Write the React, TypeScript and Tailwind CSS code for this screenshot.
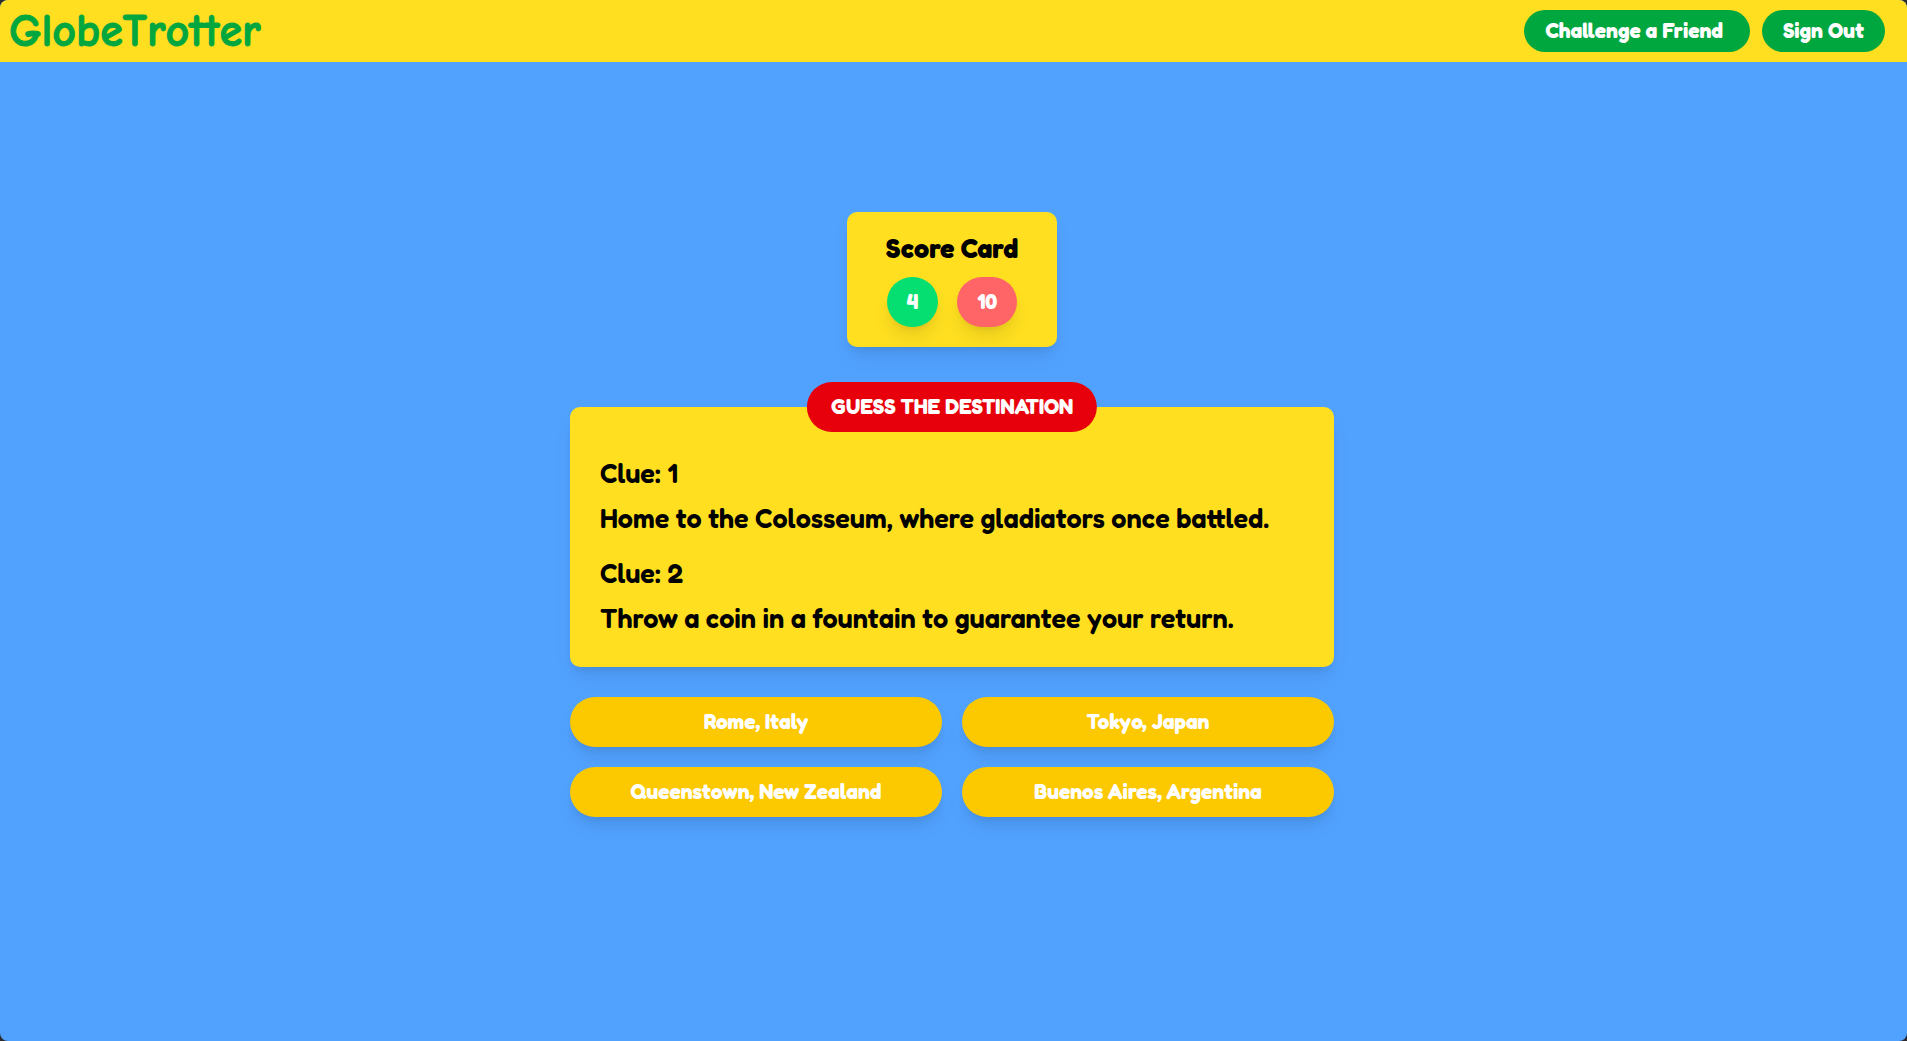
const clues = [
  "Home to the Colosseum, where gladiators once battled.",
  "Throw a coin in a fountain to guarantee your return.",
];

const answers = ["Rome, Italy", "Tokyo, Japan", "Queenstown, New Zealand", "Buenos Aires, Argentina"];

const shadow = "shadow-[0_12px_19px_-4px_rgb(0_0_0/0.1),0_5px_8px_-5px_rgb(0_0_0/0.1)]";

function Header() {
  return (
    <header className="flex items-center justify-between bg-yellow-300 py-2.5 pl-[9px] pr-[22px]">
      <h1 className="h-[42px] font-['Comic_Neue','Comic_Sans_MS',cursive] text-[46px] font-bold leading-[44px] text-green-600 [-webkit-text-stroke:1px] [font-feature-settings:'liga'_0] [font-kerning:none]">
        GlobeTrotter
      </h1>
      <nav className="flex gap-3 text-[21px] font-bold leading-[42px] text-white">
        <button type="button" className="rounded-full bg-green-600 pl-[21px] pr-[27px]">
          Challenge a Friend
        </button>
        <button type="button" className="rounded-full bg-green-600 px-[21px]">
          Sign Out
        </button>
      </nav>
    </header>
  );
}

function ScoreCard() {
  return (
    <section className={`flex flex-col items-center gap-3 rounded-[10px] bg-yellow-300 px-[39px] py-5 ${shadow}`}>
      <h2 className="text-[27px] font-bold leading-[33px]">Score Card</h2>
      <div className="flex gap-[19px] text-[21px] font-bold leading-[50px] text-white">
        <span className={`rounded-full bg-green-400 px-5 ${shadow}`}>4</span>
        <span className={`rounded-full bg-red-400 px-5 ${shadow}`}>10</span>
      </div>
    </section>
  );
}

function ClueCard() {
  return (
    <section
      className={`relative flex w-full flex-col gap-[22px] rounded-[10px] bg-yellow-300 px-[30px] pb-8 pt-[50px] ${shadow}`}
    >
      <h2 className="absolute left-1/2 top-0 -translate-x-1/2 -translate-y-1/2 whitespace-nowrap rounded-full bg-red-600 px-6 text-[21px] font-bold leading-[50px] text-white">
        GUESS THE DESTINATION
      </h2>
      {clues.map((clue, i) => (
        <div key={clue} className="flex flex-col gap-3 text-[27px] font-[650] leading-[33px]">
          <h3>Clue: {i + 1}</h3>
          <p>{clue}</p>
        </div>
      ))}
    </section>
  );
}

export default function App() {
  return (
    <div className="bg-[#2b2a2e]">
      <div className="flex min-h-screen flex-col overflow-hidden rounded-lg bg-blue-400 font-['Fredoka','Varela_Round',sans-serif] text-black">
        <Header />
        <main className="flex flex-col items-center pr-[3px] pt-[150px]">
          <ScoreCard />
          <div className="mt-[60px] flex w-full max-w-[764px] flex-col gap-[30px]">
            <ClueCard />
            <div className="grid grid-cols-2 gap-5">
              {answers.map((answer) => (
                <button
                  key={answer}
                  type="button"
                  className={`rounded-full bg-[#fcc800] text-[21px] font-bold leading-[50px] text-white ${shadow}`}
                >
                  {answer}
                </button>
              ))}
            </div>
          </div>
        </main>
      </div>
    </div>
  );
}
